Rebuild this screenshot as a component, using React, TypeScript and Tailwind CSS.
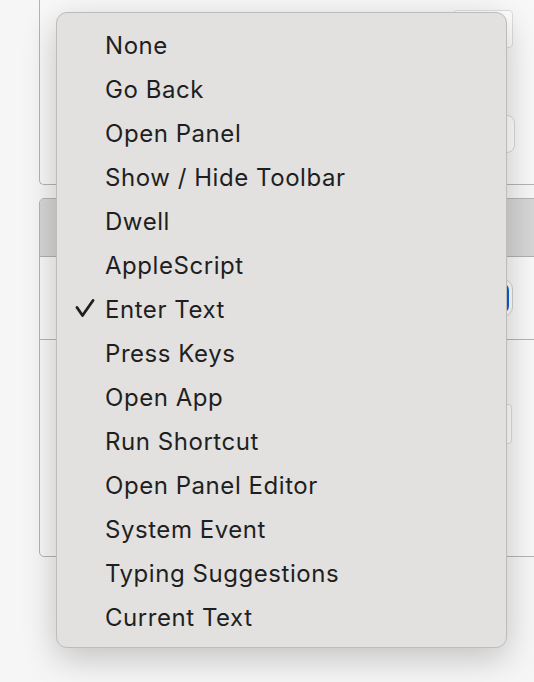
// Popup menu (macOS style) floating over a settings sheet.
const items = [
  "None",
  "Go Back",
  "Open Panel",
  "Show / Hide Toolbar",
  "Dwell",
  "AppleScript",
  "Enter Text",
  "Press Keys",
  "Open App",
  "Run Shortcut",
  "Open Panel Editor",
  "System Event",
  "Typing Suggestions",
  "Current Text",
];

const selected = "Enter Text";

function Check() {
  return (
    <svg width="20" height="20" viewBox="0 0 20 20" className="shrink-0">
      <path d="M2 8.5 L7.5 16.5 L18 1.5" fill="none" stroke="#1f1f1f" strokeWidth="2.8" strokeLinecap="round" strokeLinejoin="round" />
    </svg>
  );
}

export default function App() {
  return (
    <div className="relative w-[534px] h-[682px] overflow-hidden bg-[#f6f6f6]" style={{ fontFamily: "Inter, 'Noto Sans', sans-serif" }}>
      {/* background sheet */}
      <div className="flex flex-col pl-[39px]">
        <div className="h-[185px] border-l border-b border-[#b4b4b4] rounded-bl-[5px] bg-[#f8f8f8] flex flex-col items-end pt-[10px] -mr-[10px]">
          <div className="w-[60px] h-[38px] mr-[31px] border border-[#dedede] bg-white rounded-[4px]" />
          <div className="w-[60px] h-[38px] mr-[29px] mt-[67px] border border-[#d8d8d8] bg-white rounded-[8px]" />
        </div>
        <div className="mt-[13px] h-[359px] border border-[#b4b4b4] rounded-[5px] -mr-[10px] bg-[#f8f8f8] flex flex-col">
          <div className="h-[58px] bg-[#d6d6d6] border-b border-[#b0b0b0] rounded-t-[4px]" />
          <div className="h-[83px] border-b border-[#b4b4b4] flex items-center justify-end pr-[30px]">
            <div className="w-[60px] h-[38px] rounded-[10px] border border-[#d0d0d0] bg-white p-[3px]">
              <div className="w-full h-full rounded-[7px] bg-[#0a5fdb]" />
            </div>
          </div>
          <div className="pt-[64px] flex justify-end pr-[31px]">
            <div className="w-[60px] h-[40px] border border-[#dedede] bg-white rounded-[3px]" />
          </div>
        </div>
      </div>

      {/* popup menu */}
      <div className="absolute left-[56px] top-[12px] w-[451px] h-[636px] rounded-[11px] bg-[#e2e1e0] border border-[#bdbcbb] shadow-[0_10px_34px_rgba(0,0,0,0.22)] pt-[11px]">
        {items.map((label) => (
          <div key={label} className="relative h-[44px] flex items-center pl-[48px] text-[24px] text-[#1f1f1f] tracking-[0.55px]">
            {label === selected && (
              <span className="absolute left-[18px] top-[11px]">
                <Check />
              </span>
            )}
            {label}
          </div>
        ))}
      </div>
    </div>
  );
}
